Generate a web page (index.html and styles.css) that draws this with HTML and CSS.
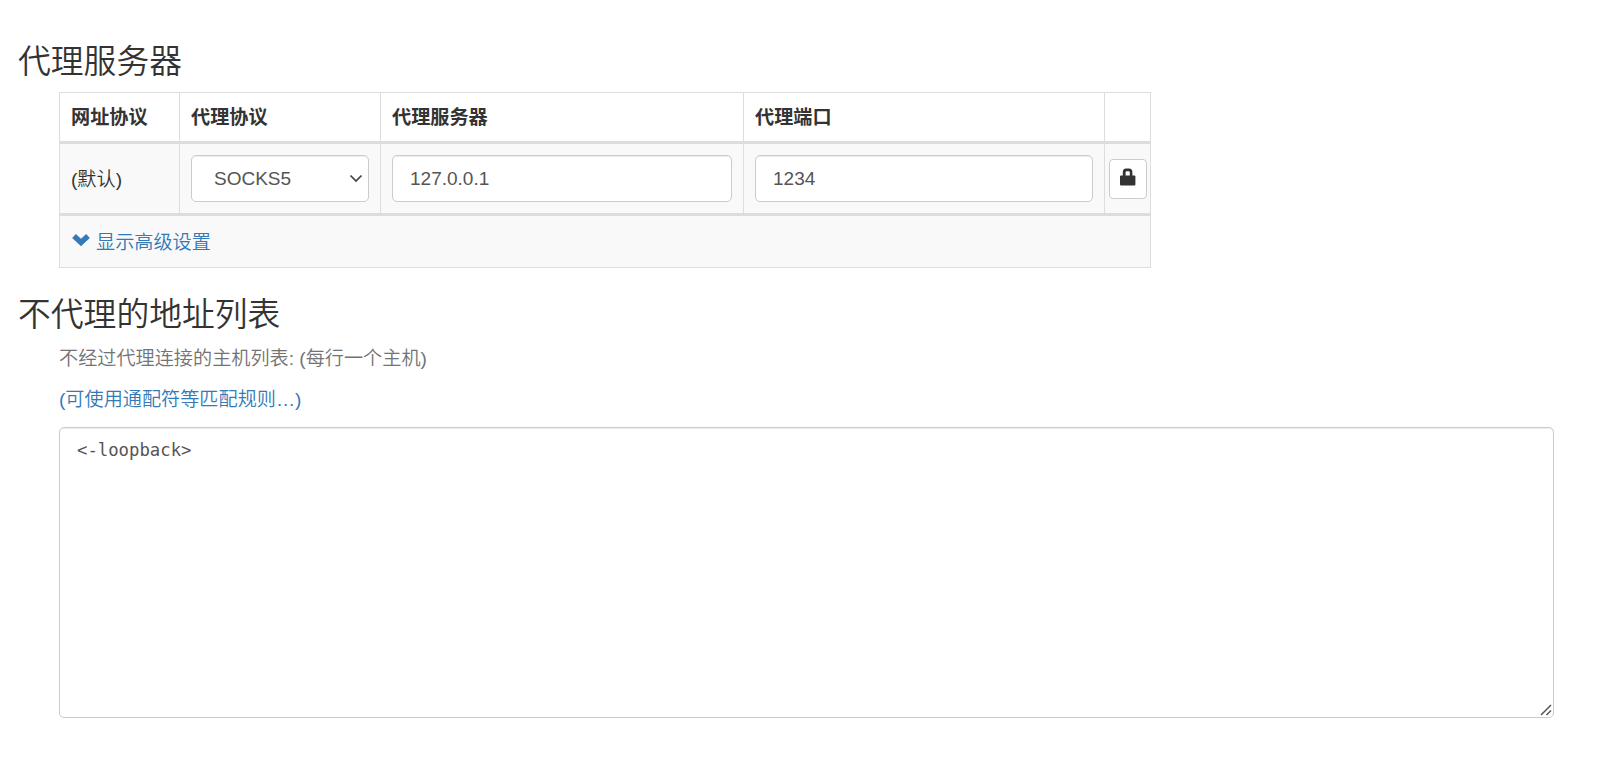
FILE: index.html
```html
<!DOCTYPE html>
<html lang="zh-CN">

<head>
    <meta charset="UTF-8">
    <meta name="viewport" content="width=device-width, initial-scale=1.0">
    <title>代理服务器</title>
    <link rel="stylesheet" href="styles.css">
</head>

<body>

    <section class="settings-group">
        <h3>代理服务器</h3>
        <table class="fixed-servers">
            <colgroup>
                <col class="col-scheme">
                <col class="col-protocol">
                <col class="col-server">
                <col class="col-port">
                <col class="col-auth">
            </colgroup>
            <thead>
                <tr>
                    <th>网址协议</th>
                    <th>代理协议</th>
                    <th>代理服务器</th>
                    <th>代理端口</th>
                    <th></th>
                </tr>
            </thead>
            <tbody>
                <tr class="server-row">
                    <td class="scheme-cell">(默认)</td>
                    <td>
                        <div class="select-wrap">
                            <select class="form-control">
                                <option>SOCKS5</option>
                            </select>
                            <svg class="select-arrow" viewBox="0 0 14 9">
                                <path d="M1.5 1.5 L7 7 L12.5 1.5"></path>
                            </svg>
                        </div>
                    </td>
                    <td><input type="text" class="form-control" value="127.0.0.1"></td>
                    <td><input type="text" class="form-control" value="1234"></td>
                    <td class="auth-cell">
                        <button class="auth-button">
                            <svg class="lock-icon" viewBox="0 0 16 18">
                                <path d="M1 7.5 H2.8 V4 Q2.8 0.5 6 0.5 H9 Q12.4 0.5 12.4 4 V7.5 H14.4 Q15.4 7.5 15.4 8.5 V16.5 Q15.4 17.5 14.4 17.5 H1 Q0 17.5 0 16.5 V8.5 Q0 7.5 1 7.5 Z M5.6 7.5 H9.8 V4.6 Q9.8 3.2 8.6 3.2 H6.8 Q5.6 3.2 5.6 4.6 Z"></path>
                            </svg>
                        </button>
                    </td>
                </tr>
            </tbody>
            <tfoot>
                <tr>
                    <td colspan="5">
                        <a class="show-advanced">
                            <svg class="chevron-icon" viewBox="0 0 18 13">
                                <path d="M2 3 L9 9.5 L16 3"></path>
                            </svg>
                            <span>显示高级设置</span>
                        </a>
                    </td>
                </tr>
            </tfoot>
        </table>
    </section>

    <section class="settings-group">
        <h3>不代理的地址列表</h3>
        <p class="help-block">不经过代理连接的主机列表: (每行一个主机)</p>
        <p class="help-block"><a>(可使用通配符等匹配规则…)</a></p>
        <div class="bypass-wrap">
            <textarea class="form-control bypass-list" spellcheck="false">&lt;-loopback&gt;</textarea>
            <svg class="resize-grip" viewBox="0 0 12 12">
                <path d="M1 11 L11 1 M6.5 11 L11 6.5"></path>
            </svg>
        </div>
    </section>

</body>

</html>
```

FILE: styles.css
```css
* {
    box-sizing: border-box;
    margin: 0;
    padding: 0;
}

body {
    font-family: "Liberation Sans", "Noto Sans CJK SC", sans-serif;
    font-size: 19.15px;
    font-weight: 350;
    line-height: 27px;
    padding: 44px 46px 0 18px;
    color: #333;
    background-color: #fff;
}

h3 {
    height: 36px;
    font-size: 32.8px;
    font-weight: 350;
    line-height: 36px;
    margin-bottom: 12px;
}

a {
    color: #337ab7;
    text-decoration: none;
    cursor: pointer;
}

.fixed-servers {
    width: 1092px;
    margin: 0 0 29px 41px;
    table-layout: fixed;
    border-collapse: separate;
    border-spacing: 0;
    border-top: 1px solid #ddd;
    border-left: 1px solid #ddd;
}

.col-scheme {
    width: 120px;
}

.col-protocol {
    width: 201px;
}

.col-server {
    width: 363px;
}

.col-port {
    width: 361px;
}

.col-auth {
    width: 46px;
}

th,
td {
    padding: 0 11px;
    text-align: left;
    vertical-align: middle;
    border-right: 1px solid #ddd;
    border-bottom: 3px solid #ddd;
}

th {
    height: 51px;
    padding-top: 1px;
    font-weight: 700;
}

td {
    height: 72px;
    background-color: #f9f9f9;
}

.scheme-cell {
    padding-top: 2px;
}

tfoot td {
    height: 52px;
    padding-top: 1px;
    border-bottom-width: 1px;
}

.form-control {
    display: block;
    width: 100%;
    height: 47px;
    padding: 0 17px;
    font-family: inherit;
    font-size: 19px;
    color: #555;
    background-color: #fff;
    border: 1px solid #ccc;
    border-radius: 5px;
    box-shadow: inset 0 1px 1px rgba(0, 0, 0, 0.075);
}

.select-wrap,
.bypass-wrap {
    position: relative;
}

select.form-control {
    padding-left: 22px;
    appearance: none;
}

.select-arrow {
    position: absolute;
    top: 19px;
    right: 6px;
    width: 14px;
    height: 9px;
    fill: none;
    stroke: #444;
    stroke-width: 1.7;
}

.auth-cell {
    padding: 0 4px;
}

.auth-button {
    display: flex;
    align-items: center;
    justify-content: center;
    width: 38px;
    height: 40px;
    padding-bottom: 3px;
    background-color: #fff;
    border: 1px solid #ccc;
    border-radius: 4px;
}

.lock-icon {
    width: 16px;
    height: 18px;
    fill: #333;
}

.show-advanced {
    display: flex;
    align-items: center;
    gap: 6px;
}

.chevron-icon {
    width: 18px;
    height: 13px;
    margin: 0 0 5px 1px;
    fill: none;
    stroke: #337ab7;
    stroke-width: 5.4;
}

.help-block {
    height: 27px;
    margin: 0 0 14px 41px;
    color: #737373;
}

.bypass-wrap {
    width: 1495px;
    margin-left: 41px;
}

.bypass-list {
    height: 291px;
    padding: 9px 17px;
    font-family: "DejaVu Sans Mono", monospace;
    font-size: 17.3px;
    line-height: 27px;
    resize: none;
}

.resize-grip {
    position: absolute;
    right: 2px;
    bottom: 2px;
    width: 12px;
    height: 12px;
    fill: none;
    stroke: #555;
    stroke-width: 1.5;
}
```
